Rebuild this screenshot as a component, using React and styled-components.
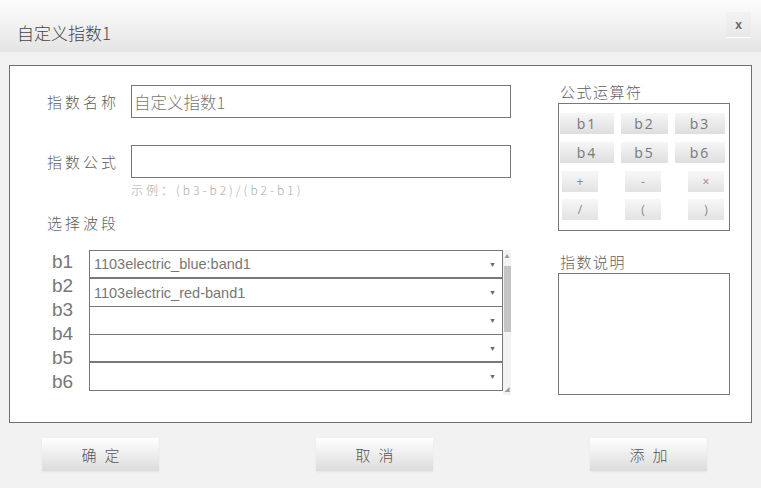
import React from "react";
import styled, { createGlobalStyle } from "styled-components";

const GlobalStyle = createGlobalStyle`
  html, body {
    margin: 0;
    padding: 0;
    background: #f2f2f2;
  }
  * {
    box-sizing: border-box;
  }
`;

const CJK = `"Noto Sans CJK SC", "Noto Sans", sans-serif`;

const bandNames = ["b1", "b2", "b3", "b4", "b5", "b6"];

// only five selects are visible, the list is scrolled
const selects = [
  { id: 1, value: "1103electric_blue:band1", thick: true },
  { id: 2, value: "1103electric_red-band1" },
  { id: 3, value: "" },
  { id: 4, value: "", thick: true },
  { id: 5, value: "" },
];

const opKeys = [
  ["+", "-", "×"],
  ["/", "(", ")"],
];

const App = () => {
  return (
    <StWindow>
      <GlobalStyle />
      <StHeader>
        <StTitle>自定义指数1</StTitle>
        <StClose>x</StClose>
      </StHeader>

      <StPanel>
        <StLeft>
          <StField top={19}>
            <StLabel>指数名称</StLabel>
            <StInput>自定义指数1</StInput>
          </StField>
          <StField top={27}>
            <StLabel>指数公式</StLabel>
            <StInput />
          </StField>
          <StHint>示例：(b3-b2)/(b2-b1)</StHint>
          <StSection>选择波段</StSection>

          <StBands>
            <StBandNames>
              {bandNames.map((b) => (
                <StBandName key={b}>{b}</StBandName>
              ))}
            </StBandNames>
            <StSelects>
              {selects.map((s) => (
                <StSelect key={s.id} thick={s.thick}>
                  <span>{s.value}</span>
                  <StArrow>▼</StArrow>
                </StSelect>
              ))}
            </StSelects>
            <StScrollbar>
              <StScrollArrow>▲</StScrollArrow>
              <StThumb />
              <StScrollArrow bottom>◢</StScrollArrow>
            </StScrollbar>
          </StBands>
        </StLeft>

        <StRight>
          <StSideTitle>公式运算符</StSideTitle>
          <StOpBox>
            <StBandGrid>
              {bandNames.map((k) => (
                <StOpButton key={k}>{k}</StOpButton>
              ))}
            </StBandGrid>
            {opKeys.map((row, i) => (
              <StOpRow key={i}>
                {row.map((k) => (
                  <StSymButton key={k}>{k}</StSymButton>
                ))}
              </StOpRow>
            ))}
          </StOpBox>

          <StSideTitle top={20}>指数说明</StSideTitle>
          <StDescBox />
        </StRight>
      </StPanel>

      <StFooter>
        <StFootButton>确定</StFootButton>
        <StFootButton>取消</StFootButton>
        <StFootButton>添加</StFootButton>
      </StFooter>
    </StWindow>
  );
};

const StWindow = styled.div`
  width: 761px;
  height: 488px;
  background: #f2f2f2;
  font-family: ${CJK};
  font-weight: 300;
  overflow: hidden;
`;

const StHeader = styled.div`
  height: 52px;
  background: linear-gradient(#fdfdfd, #e4e4e4);
  display: flex;
  align-items: center;
  justify-content: space-between;
  padding: 0 10px 0 17px;
`;

const StTitle = styled.div`
  font-size: 17px;
  color: #444;
  padding-top: 12px;
`;

const StClose = styled.div`
  width: 25px;
  height: 26px;
  margin-top: -2px;
  display: flex;
  align-items: center;
  justify-content: center;
  font-family: "Liberation Sans", Arial, sans-serif;
  font-size: 12px;
  font-weight: bold;
  color: #666;
  background: linear-gradient(#f2f2f2, #e8e8e8);
  border-bottom: 1px solid #fff;
`;

const StPanel = styled.div`
  margin: 13px 0 0 9px;
  width: 743px;
  height: 358px;
  border: 1px solid #6f6f6f;
  background: #fff;
  display: flex;
`;

const StLeft = styled.div`
  width: 502px;
  padding-left: 37px;
  display: flex;
  flex-direction: column;
`;

const StField = styled.div`
  display: flex;
  align-items: center;
  margin-top: ${({ top }) => top}px;
`;

const StLabel = styled.div`
  width: 84px;
  font-size: 15px;
  letter-spacing: 3px;
  color: #5e5e5e;
`;

const StInput = styled.div`
  width: 380px;
  height: 33px;
  border: 1px solid #777;
  padding: 0 2px;
  display: flex;
  align-items: center;
  font-size: 16.5px;
  color: #777;
`;

const StHint = styled.div`
  margin: 5px 0 0 84px;
  font-size: 12px;
  line-height: 14px;
  letter-spacing: 3px;
  color: #aaa;
`;

const StSection = styled.div`
  margin-top: 16px;
  font-size: 15px;
  line-height: 20px;
  letter-spacing: 3px;
  color: #5e5e5e;
`;

const StBands = styled.div`
  margin-top: 17px;
  display: flex;
`;

const StBandNames = styled.div`
  width: 42px;
  padding-left: 5px;
  display: flex;
  flex-direction: column;
`;

const StBandName = styled.div`
  height: 24px;
  line-height: 24px;
  font-family: "Liberation Sans", Arial, sans-serif;
  font-size: 19px;
  color: #777;
`;

const StSelects = styled.div`
  width: 414px;
  height: 141px;
  border-top: 1px solid #777;
`;

const StSelect = styled.div`
  height: 28px;
  border: 1px solid #777;
  border-top: none;
  border-bottom-width: ${({ thick }) => (thick ? 2 : 1)}px;
  display: flex;
  align-items: center;
  justify-content: space-between;
  padding: 0 6px 0 4px;
  font-family: "Liberation Sans", Arial, sans-serif;
  font-size: 14.5px;
  color: #777;
`;

const StArrow = styled.span`
  font-size: 7px;
  color: #666;
`;

const StScrollbar = styled.div`
  width: 8px;
  height: 145px;
  background: #f3f3f3;
  display: flex;
  flex-direction: column;
  align-items: center;
`;

const StScrollArrow = styled.div`
  height: 12px;
  font-size: 5px;
  line-height: 12px;
  color: #999;
  margin-top: ${({ bottom }) => (bottom ? "auto" : "0")};
`;

const StThumb = styled.div`
  margin-top: 4px;
  width: 7px;
  height: 66px;
  background: #c4c4c4;
`;

const StRight = styled.div`
  padding-left: 46px;
  display: flex;
  flex-direction: column;
`;

const StSideTitle = styled.div`
  margin-top: ${({ top }) => top || 15}px;
  margin-left: 2px;
  font-size: 15px;
  line-height: 22px;
  letter-spacing: 1.5px;
  color: #5e5e5e;
`;

const StOpBox = styled.div`
  width: 172px;
  height: 128px;
  border: 1px solid #777;
  padding: 9px 5px 0 1px;
`;

const StBandGrid = styled.div`
  display: grid;
  grid-template-columns: 54px 47px 50px;
  column-gap: 7px;
  row-gap: 8px;
`;

const StOpButton = styled.div`
  height: 21px;
  display: flex;
  align-items: center;
  justify-content: center;
  background: linear-gradient(#f6f6f6, #dedede);
  font-family: "Open Sans", sans-serif;
  font-weight: 400;
  font-size: 14px;
  letter-spacing: 2px;
  color: #777;
`;

const StOpRow = styled.div`
  display: flex;
  justify-content: space-between;
  margin-top: 8px;
  padding-left: 2px;

  & + & {
    margin-top: 7px;
  }
`;

const StSymButton = styled.div`
  width: 36px;
  height: 21px;
  display: flex;
  align-items: center;
  justify-content: center;
  background: linear-gradient(#f8f8f8, #e2e2e2);
  font-family: "Open Sans", sans-serif;
  font-weight: 400;
  font-size: 12px;
  color: #888;
`;

const StDescBox = styled.div`
  width: 172px;
  height: 122px;
  border: 1px solid #777;
`;

const StFooter = styled.div`
  display: flex;
  justify-content: space-between;
  padding: 15px 54px 0 42px;
`;

const StFootButton = styled.div`
  width: 117px;
  height: 33px;
  display: flex;
  align-items: center;
  justify-content: center;
  background: linear-gradient(#ffffff, #dcdcdc);
  box-shadow: 0 1px 2px rgba(0, 0, 0, 0.06);
  font-size: 15px;
  letter-spacing: 8px;
  padding-left: 8px;
  color: #555;
`;

export default App;
